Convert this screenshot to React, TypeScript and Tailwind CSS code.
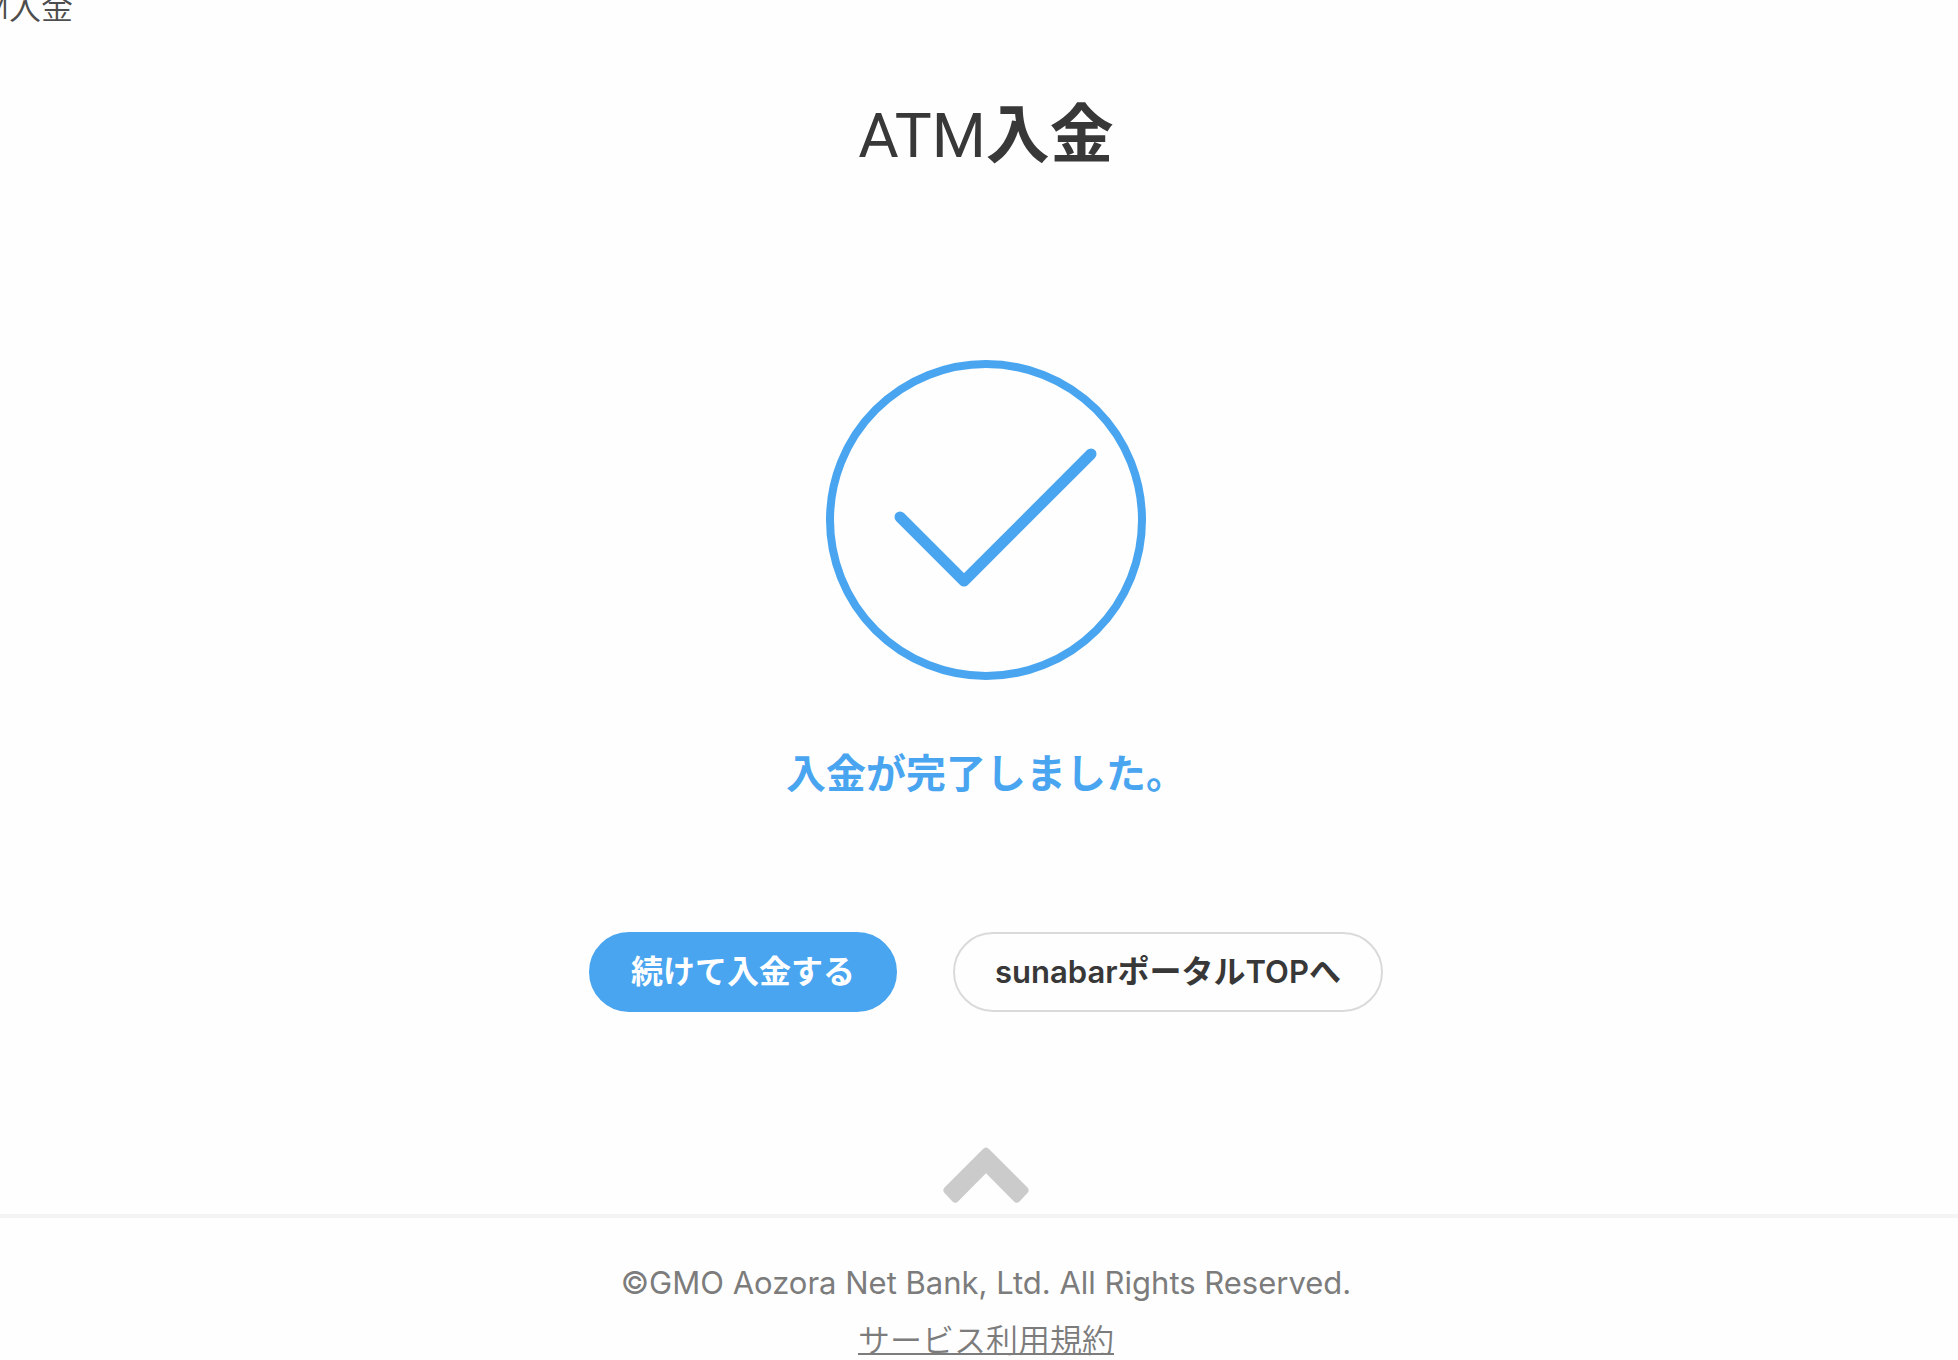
import React from "react";

const CheckCircle = () => (
  <svg
    viewBox="0 0 320 320"
    className="block size-80 text-[#49a5f0]"
    fill="none"
    stroke="currentColor"
    aria-hidden="true"
  >
    <circle cx="160" cy="160" r="156" strokeWidth="8" />
    <path
      d="M74 157l64 64L265 94"
      strokeWidth="11"
      strokeLinecap="round"
      strokeLinejoin="round"
    />
  </svg>
);

const ChevronUp = () => (
  <svg viewBox="0 0 86 56" className="block h-14 w-[86px]" fill="#cbcbcb" aria-hidden="true">
    <path d="M40 2Q43-1 46 2L84.5 40.5Q87 43.3 84.5 46L76.5 54.5Q73.7 57 71 54.5L43 26.3L15 54.5Q12.3 57 9.5 54.5L1.5 46Q-1 43.3 1.5 40.5Z" />
  </svg>
);

const ActionButton = ({
  variant,
  children,
}: {
  variant: "primary" | "outline";
  children: React.ReactNode;
}) => (
  <button
    type="button"
    className={
      variant === "primary"
        ? "h-20 px-10 rounded-full border-2 border-[#49a5f0] bg-[#49a5f0] text-white text-[32px] leading-10 font-semibold whitespace-nowrap"
        : "h-20 px-10 rounded-full border-2 border-[#dadada] bg-[#fefefe] text-[#383838] text-[32px] leading-10 font-semibold whitespace-nowrap"
    }
  >
    {children}
  </button>
);

export default function App() {
  return (
    <div className="overflow-x-hidden bg-[#fefefe] font-['Inter','Noto_Sans_CJK_JP',sans-serif] text-[#383838]">
      <nav className="flex h-8 w-[73px] items-end justify-end overflow-hidden text-[32px] leading-[48px] text-[#4d4d4d]">
        <span className="whitespace-nowrap font-[350]">ATM入金</span>
      </nav>
      <main className="flex flex-col items-center pl-3.5">
        <h1 className="mt-14 text-[64px] leading-[92px] font-bold">
          <span className="font-['Roboto',sans-serif] text-[62px] leading-none font-normal">ATM</span>
          入金
        </h1>
        <div className="mt-45">
          <CheckCircle />
        </div>
        <p className="mt-16 text-[40px] leading-[60px] font-semibold text-[#49a5f0]">
          入金が完了しました。
        </p>
        <div className="mt-32 flex gap-14">
          <ActionButton variant="primary">続けて入金する</ActionButton>
          <ActionButton variant="outline">
            <span className="text-[31px]">sunabar</span>ポータル
            <span className="text-[31px]">TOP</span>へ
          </ActionButton>
        </div>
        <a href="#" className="mt-[135px] mb-[11px]" aria-label="ページの先頭へ">
          <ChevronUp />
        </a>
      </main>
      <footer className="flex flex-col items-center border-t-4 border-[#f4f4f4] pt-9 pl-3.5 text-[32px] leading-[58px] text-[#7c7c7c]">
        <small className="text-[31px]">©GMO Aozora Net Bank, Ltd. All Rights Reserved.</small>
        <a href="#" className="font-[350] underline decoration-2">
          サービス利用規約
        </a>
      </footer>
    </div>
  );
}
